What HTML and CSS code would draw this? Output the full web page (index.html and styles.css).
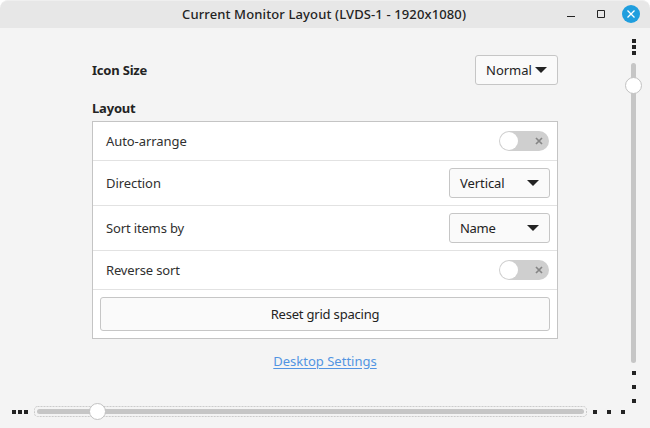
FILE: index.html
```html
<!DOCTYPE html>
<html lang="en">
<head>
<meta charset="utf-8">
<title>Current Monitor Layout</title>
<link rel="stylesheet" href="styles.css">
</head>
<body>
<div class="window">
  <header class="titlebar">
    <h1 class="title">Current Monitor Layout (LVDS-1 - 1920x1080)</h1>
    <div class="controls">
      <svg class="control" viewBox="0 0 18 18"><path d="M5 11.5h8" stroke="#232323"/></svg>
      <svg class="control" viewBox="0 0 18 18"><path d="M5.5 5.5h7v7h-7z" fill="none" stroke="#232323"/></svg>
      <svg class="control" viewBox="0 0 18 18"><circle cx="9" cy="9" r="9" fill="#1f9ede"/><path d="M5.5 5.5l7 7M12.5 5.5l-7 7" stroke="#fff" stroke-width="1.3"/></svg>
    </div>
  </header>
  <div class="body">
    <main class="settings">
      <div class="icon-size">
        <h2 class="heading icon-heading">Icon Size</h2>
        <button class="combo compact"><span>Normal</span><svg class="arrow" viewBox="0 0 12 6"><path d="M0 0h12L6 6z"/></svg></button>
      </div>
      <h2 class="heading layout-heading">Layout</h2>
      <section class="list">
        <div class="row"><span class="auto">Auto-arrange</span><div class="switch"><i class="knob"></i><svg class="cross" viewBox="0 0 8 8"><path d="M1 1l6 6M7 1L1 7"/></svg></div></div>
        <div class="row tall"><span class="direction">Direction</span><button class="combo"><span class="vertical-label">Vertical</span><svg class="arrow" viewBox="0 0 12 6"><path d="M0 0h12L6 6z"/></svg></button></div>
        <div class="row tall"><span class="sort">Sort items by</span><button class="combo"><span class="name">Name</span><svg class="arrow" viewBox="0 0 12 6"><path d="M0 0h12L6 6z"/></svg></button></div>
        <div class="row"><span class="reverse">Reverse sort</span><div class="switch"><i class="knob"></i><svg class="cross" viewBox="0 0 8 8"><path d="M1 1l6 6M7 1L1 7"/></svg></div></div>
        <div class="row action"><button class="reset"><span class="reset-label">Reset grid spacing</span></button></div>
      </section>
      <a class="link" href="#">Desktop Settings</a>
    </main>
    <aside class="v-scale">
      <div class="dots column tight"><i></i><i></i><i></i></div>
      <div class="v-track"><i class="thumb"></i></div>
      <div class="dots column"><i></i><i></i><i></i></div>
    </aside>
  </div>
  <footer class="h-scale">
    <div class="dots tight"><i></i><i></i><i></i></div>
    <div class="focus">
      <svg class="focus-ring" viewBox="0 0 553 11"><rect x=".5" y=".5" width="552" height="10" rx="3" fill="none" stroke="#cbcbcb" stroke-dasharray="2 1"/></svg>
      <div class="h-track"><i class="thumb"></i></div>
    </div>
    <div class="dots"><i></i><i></i><i></i></div>
  </footer>
</div>
</body>
</html>
```
FILE: styles.css
```css
* { box-sizing: border-box; }
body { margin: 0; background: #fff; font: 13px/18px "Noto Sans", "Open Sans", sans-serif; color: #303030; }
h1, h2 { margin: 0; font-size: 13px; line-height: 18px; }
button { font: inherit; color: #232323; margin: 0; background: #fafafa; border: 1px solid #c6c6c6; border-radius: 3px; }
span, .title, .heading { white-space: nowrap; }
svg { display: block; flex: none; }

.window { width: 650px; height: 428px; display: flex; flex-direction: column; background: #f4f4f4; border-radius: 8px 8px 0 0; overflow: hidden; }
.titlebar { height: 28px; flex: none; display: grid; grid-template-columns: 182px 1fr 78px 10px; align-items: start; padding-top: 4px; background: #e7e7e7; border-top: 1px solid #efefef; border-radius: 8px 8px 0 0; }
.title { grid-column: 2; font-weight: 500; color: #232323; letter-spacing: .125px; }
.controls { display: flex; gap: 12px; }
.control { width: 18px; height: 18px; }

.body { display: flex; height: 375px; flex: none; }
.settings { width: 466px; margin-left: 92px; padding-top: 27px; }
.icon-size { display: flex; justify-content: space-between; align-items: center; height: 30px; }
.heading { font-weight: 700; color: #232323; letter-spacing: -.2px; }
.layout-heading { margin: 14px 0 4px; }
.list { background: #fff; border: 1px solid #c4c4c4; height: 218px; }
.row { height: 39px; padding: 0 8px 0 13px; display: flex; align-items: center; justify-content: space-between; border-bottom: 1px solid #e2e2e2; }
.tall { height: 45px; padding-right: 7px; }
.action { height: 48px; padding: 0 7px; border-bottom: 0; }
.auto, .direction { letter-spacing: -.07px; }
.sort, .reverse { letter-spacing: -.15px; }
.vertical-label { letter-spacing: -.07px; }
.name { letter-spacing: -.3px; }
.reset-label { letter-spacing: -.2px; }
.combo { width: 101px; height: 30px; padding: 0 10px; display: flex; align-items: center; justify-content: space-between; }
.compact { width: 83px; }
.arrow { width: 12px; height: 6px; fill: #232323; }
.switch { width: 50px; height: 20px; border-radius: 10px; background: #cfcfcf; display: flex; align-items: center; justify-content: space-between; padding: 0 6px 0 1px; }
.knob { width: 18px; height: 18px; border-radius: 50%; background: #fff; }
.cross { width: 8px; height: 8px; stroke: #858585; stroke-width: 1.7; }
.reset { width: 450px; height: 34px; padding: 0; }
.link { display: block; margin-top: 13px; text-align: center; color: #5294e2; text-decoration: underline; text-underline-offset: 2px; }

.v-scale { width: 17px; margin-left: 67px; padding-top: 11px; display: flex; flex-direction: column; align-items: center; }
.dots { display: flex; gap: 10px; flex: none; }
.dots i { width: 4px; height: 4px; background: #232323; }
.column { flex-direction: column; }
.tight { gap: 2px; }
.v-track { width: 5px; height: 300px; flex: none; margin: 8px 0; border-radius: 3px; background: #c6c6c6; padding-top: 14px; }
.thumb { display: block; width: 17px; height: 17px; border-radius: 50%; background: #fff; border: 1px solid #c2c2c2; }
.v-track .thumb { margin-left: -6px; }
.h-scale { height: 25px; display: flex; padding-left: 12px; }
.h-scale .dots { margin-top: 7px; }
.focus { width: 553px; height: 11px; margin: 3px 6px 0; display: grid; align-items: center; }
.focus-ring, .h-track { grid-area: 1 / 1; }
.focus-ring { width: 553px; height: 11px; }
.h-track { width: 547px; height: 5px; margin-left: 3px; border-radius: 3px; background: #c6c6c6; padding-left: 52px; }
.h-track .thumb { margin-top: -6px; }
```
